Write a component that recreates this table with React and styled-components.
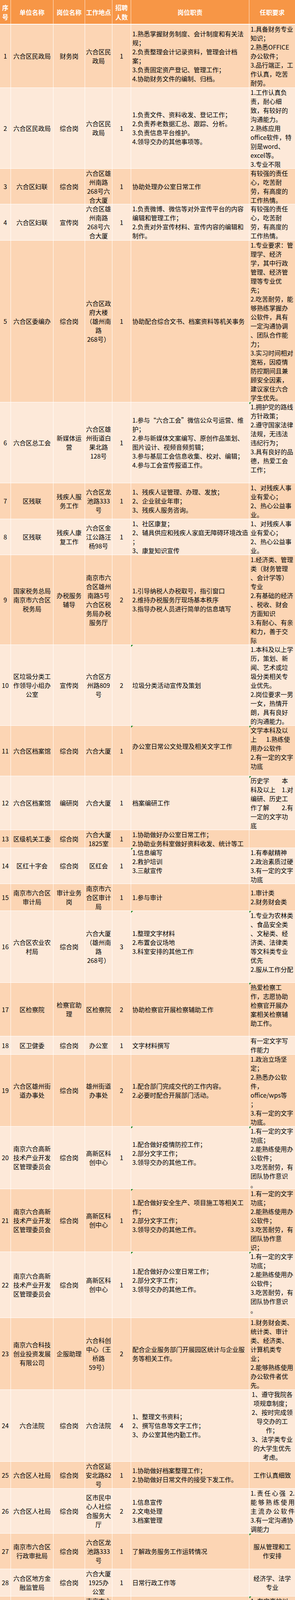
import React from "react";
import styled, { createGlobalStyle, css } from "styled-components";

const GlobalStyle = createGlobalStyle`
  html, body {
    margin: 0;
    padding: 0;
    background: #ffffff;
  }
  body {
    font-family: "Noto Sans CJK SC", "Noto Sans", sans-serif;
    color: #000;
  }
`;

const WIDTHS = [28, 109, 81, 70, 48, 303, 117];

const Table = styled.div`
  width: 756px;
  display: flex;
  flex-direction: column;
`;

const HeaderRow = styled.div`
  display: flex;
  flex: 0 0 63px;
  height: 63px;
  overflow: hidden;
  box-sizing: border-box;
  background: #f79646;
  border-bottom: 2px solid #ffffff;
`;

const HeaderCell = styled.div`
  flex: 0 0 ${(p) => p.$w}px;
  box-sizing: border-box;
  display: flex;
  flex-direction: column;
  justify-content: center;
  align-items: center;
  color: #ffffff;
  font-weight: 700;
  font-size: 16px;
  line-height: 24px;
  text-align: center;
  border-right: 1px solid rgba(255, 255, 255, 0.8);

  &:last-child {
    border-right: none;
  }
`;

const Row = styled.div`
  display: flex;
  flex: 0 0 ${(p) => p.$h}px;
  height: ${(p) => p.$h}px;
  overflow: hidden;
  box-sizing: border-box;
  background: ${(p) => (p.$dark ? "#fcd5b4" : "#fde9d9")};
  border-bottom: 1px solid #ffffff;
`;

const Cell = styled.div`
  flex: 0 0 ${(p) => p.$w}px;
  box-sizing: border-box;
  position: relative;
  overflow: hidden;
  display: flex;
  flex-direction: column;
  justify-content: safe center;
  text-align: ${(p) => p.$align};
  padding: ${(p) => (p.$align === "left" ? "0 1px 0 3px" : "0")};
  font-size: 16px;
  line-height: 23px;
  border-right: 1px solid #ffffff;

  &:last-child {
    border-right: none;
  }

  ${(p) =>
    p.$flag &&
    css`
      &::before {
        content: "";
        position: absolute;
        top: 0;
        left: 0;
        width: 0;
        height: 0;
        border-top: 5px solid #118011;
        border-right: 5px solid transparent;
      }
    `}
`;

const Line = styled.div`
  flex: 0 0 auto;
  min-height: 23px;
  white-space: ${(p) => (p.$justify ? "nowrap" : "pre")};
  ${(p) =>
    p.$justify &&
    css`
      text-align: justify;
      text-align-last: justify;
    `}
`;

const headers = ["序\n号", "单位名称", "岗位名称", "工作地点", "招聘\n人数", "岗位职责", "任职要求"];

const rows = [
  {
    h: 162, n: "1", unit: "六合区民政局", post: "财务岗", place: "六合区民\n政局", count: "1",
    duty: "1.熟悉掌握财务制度、会计制度和有关法\n规；\n2.负责整理会计记录资料，管理会计档\n案；\n3.负责固定资产登记、管理工作；\n4.协助财务文件的编制、归档。",
    req: "1.具备财务专业\n知识；\n2.熟悉OFFICE\n办公软件；\n3.品行端正，工\n作认真，吃苦\n耐劳。",
  },
  {
    h: 207, n: "2", unit: "六合区民政局", post: "综合岗", place: "六合区民\n政局", count: "1",
    duty: "1.负责文件、资料收发、登记工作；\n2.负责养老数据汇总、跟踪、分析。\n3.负责信息平台维护。\n4.领导交办的其他事项等。",
    req: "1.工作认真负\n责，耐心细\n致，有较好的\n沟通能力。\n2.熟练应用\noffice软件，特\n别是word、\nexcel等。\n3.专业不限",
  },
  {
    h: 91, n: "3", unit: "六合区妇联", post: "综合岗", place: "六合区雄\n州南路\n268号六\n合大厦", count: "1",
    duty: "协助处理办公室日常工作",
    req: "有较强的责任\n心，吃苦耐\n劳，有高度的\n工作热情。",
  },
  {
    h: 93, n: "4", unit: "六合区妇联", post: "宣传岗", place: "六合区雄\n州南路\n268号六\n合大厦", count: "1",
    duty: "1.负责微博、微信等对外宣传平台的内容\n编辑和管理工作；\n2.负责对外宣传材料、宣传内容的编辑和\n制作。",
    req: "有较强的责任\n心，吃苦耐\n劳，有高度的\n工作热情。",
  },
  {
    h: 414, n: "5", unit: "六合区委编办", post: "综合岗", place: "六合区政\n府大楼\n（雄州南\n路\n268号）", count: "1",
    duty: "协助配合综合文书、档案资料等机关事务",
    req: "1.专业要求：管\n理学、经济\n学，其中行政\n管理、经济管\n理等专业优\n先；\n2.吃苦耐劳，能\n够熟练掌握办\n公软件，具有\n一定沟通协调\n、团队合作能\n力；\n3.实习时间相对\n宽裕，因疫情\n防控期间且兼\n顾安全因素，\n建议家住六合\n学生优先。",
  },
  {
    h: 207, n: "6", unit: "六合区总工会", post: "新媒体运\n营", place: "六合区雄\n州街道白\n果北路\n128号", count: "1",
    duty: "1.参与“六合工会”微信公众号运营、维\n护；\n2.参与新媒体文案编写、原创作品策划、\n图片设计、视频音频剪辑；\n3.参与基层工会信息收集、校对、编辑；\n4.参与工会宣传报道工作。",
    req: "1.拥护党的路线\n方针政策；\n2.遵守国家法律\n法规，无违法\n违纪行为；\n3.具有良好的品\n德，热爱工会\n工作；\n",
    reqFlag: true,
  },
  {
    h: 92, n: "7", unit: "区残联", post: "残疾人服\n务工作", place: "六合区龙\n池路333\n号", count: "1",
    duty: "1、残疾人证管理、办理、发放；\n2、企业就业年审；\n3、残疾人服务咨询。",
    req: "1、对残疾人事\n业有爱心；\n2、热心公益事\n业。",
  },
  {
    h: 92, n: "8", unit: "区残联", post: "残疾人康\n复工作", place: "六合区金\n江公路汪\n杨98号", count: "1",
    duty: "1、社区康复；\n2、辅具供应和残疾人家庭无障碍环境改造\n；\n3、康复知识宣传",
    req: "1、对残疾人事\n业有爱心；\n2、热心公益事\n业。",
  },
  {
    h: 230, n: "9", unit: "国家税务总局\n南京市六合区\n税务局", post: "办税服务\n辅导", place: "南京市六\n合区雄州\n南路5号\n六合区税\n务局办税\n服务厅", count: "2",
    duty: "1.引导纳税人办税取号，指引窗口\n2.维持办税服务厅现场基本秩序\n3.指导办税人员进行简单的信息填写",
    req: "1.经济类、管理\n类（财务管理\n、会计学等）\n专业\n2.有基础的经济\n、税收、财会\n方面知识\n3.有耐心、有亲\n和力，善于交\n际",
  },
  {
    h: 207, n: "10", unit: "区垃圾分类工\n作领导小组办\n公室", post: "宣传岗", place: "六合区方\n州路809\n号", count: "2",
    duty: "垃圾分类活动宣传及策划",
    req: "1.本科及以上学\n历，策划、新\n闻、艺术或垃\n圾分类相关专\n业优先。\n2.岗位要求一男\n一女，热情开\n朗，具有良好\n的沟通能力。",
    dutyFlag: true,
  },
  {
    h: 129, n: "11", unit: "六合区档案馆", post: "综合岗", place: "六合大厦", count: "1",
    duty: "办公室日常公文处理及相关文字工作\n",
    req: "文学本科及以\n上\u3000\u20021.熟练使\n用办公软件\n2.有一定的文字\n功底\n",
    dutyFlag: true, reqFlag: true,
  },
  {
    h: 138, n: "12", unit: "六合区档案馆", post: "编研岗", place: "六合大厦", count: "1",
    duty: "档案编研工作",
    req: "历史学\u3000\u3000本\n科及以上\u30001.对\n编研、历史工\n作了解\u3000\u30002.有\n一定的文字功\n底",
    reqFlag: true,
  },
  {
    h: 46, n: "13", unit: "区级机关工委", post: "综合岗", place: "六合大厦\n1825室", count: "1",
    duty: "1.协助做好办公室日常工作；\n2.协助业务科室做好资料收发、统计等工",
    req: "",
  },
  {
    h: 92, n: "14", unit: "区红十字会", post: "综合岗", place: "区红会", count: "1",
    duty: "1.信息编写\n2.救护培训\n3.三献宣传\n",
    req: "1.有奉献精神\n2.政治素质过硬\n3.有一定的文字\n功底",
    dutyFlag: true,
  },
  {
    h: 69, n: "15", unit: "南京市六合区\n审计局", post: "审计业务\n岗", place: "南京市六\n合区审计\n局", count: "1",
    duty: "1.参与审计",
    req: "1.审计类\n2.财务财会类",
  },
  {
    h: 184, n: "16", unit: "六合区农业农\n村局", post: "综合岗", place: "六合大厦\n（雄州南\n路\n268号）", count: "3",
    duty: "1.整理文字材料\n2.布置会议场地\n3.科室安排的其他工作\n",
    req: "1.专业为农林类\n、食品安全类\n、文秘类、经\n济类、法律类\n等文科类专业\n优先\n2.服从工作分配\n",
    dutyFlag: true, reqFlag: true,
  },
  {
    h: 137, n: "17", unit: "区检察院", post: "检察官助\n理", place: "区检察院", count: "2",
    duty: "协助检察官开展检察辅助工作",
    req: "热爱检察工\n作，志愿协助\n检察官开展办\n案相关检察辅\n助工作。\n",
    reqFlag: true,
  },
  {
    h: 47, n: "18", unit: "区卫健委", post: "综合岗", place: "办公室", count: "1",
    duty: "文字材料撰写",
    req: "有一定文字写\n作能力",
  },
  {
    h: 184, n: "19", unit: "六合区雄州街\n道办事处", post: "综合岗", place: "雄州街道\n办事处", count: "2",
    duty: "1.配合部门完成交代的工作内容。\n2.必要时配合开展部门活动。",
    req: "1.政治立场坚\n定；\n2.熟悉办公软\n件，\noffice/wps等\n；\n3.有一定的文字\n功底。",
  },
  {
    h: 160, n: "20", unit: "南京六合高新\n技术产业开发\n区管理委员会", post: "综合岗", place: "高新区科\n创中心", count: "1",
    duty: "1.配合做好疫情防控工作；\n2.部分文字工作；\n3.领导交办的其他工作。\n",
    req: "1.有一定的文字\n功底；\n2.能熟练使用办\n公软件；\n3.吃苦耐劳，有\n团队协作意识\n。",
    dutyFlag: true, reqFlag: true,
  },
  {
    h: 161, n: "21", unit: "南京六合高新\n技术产业开发\n区管理委员会", post: "综合岗", place: "高新区科\n创中心", count: "1",
    duty: "1.配合做好安全生产、项目施工等相关工\n作；\n2.部分文字工作；\n3.领导交办的其他工作。\n",
    req: "1.有一定的文字\n功底；\n2.能熟练使用办\n公软件；\n3.吃苦耐劳，有\n团队协作意\n识；",
    dutyFlag: true,
  },
  {
    h: 169, n: "22", unit: "南京六合高新\n技术产业开发\n区管理委员会", post: "综合岗", place: "高新区科\n创中心", count: "1",
    duty: "1.配合做好办公室日常工作；\n2.部分文字工作；\n3.领导交办的其他工作。\n",
    req: "1.有一定的文字\n功底；\n2.能熟练使用办\n公软件；\n3.吃苦耐劳，有\n团队协作意识\n。\n",
    dutyFlag: true, reqFlag: true,
  },
  {
    h: 184, n: "23", unit: "南京六合科技\n创业投资发展\n有限公司", post: "企服助理", place: "六合科创\n中心（王\n桥路\n59号）", count: "2",
    duty: "配合企业服务部门开展园区统计与企业服\n务等相关工作。",
    req: "1.财务财会类、\n统计类、审计\n类、经济类、\n计算机类专\n业；\n2.能够熟练使用\n办公软件者优\n先。",
  },
  {
    h: 184, n: "24", unit: "六合法院", post: "综合岗", place: "六合法院", count: "4",
    duty: "1、整理文书资料；\n2、撰写信息等文字工作；\n3、办公室其他内勤工作。",
    req: "1、遵守我院各\n项规章制度；\n2、按时完成领\n导交办的工\n作；\n3、法学类专业\n的大学生优先\n考虑。",
    reqAlign: "center",
  },
  {
    h: 69, n: "25", unit: "六合区人社局", post: "综合岗", place: "六合区延\n安北路82\n号", count: "1",
    duty: "1.协助做好档案整理工作；\n2.协助做好日常文件的接受下发工作。",
    req: "工作认真细致",
    reqAlign: "center",
  },
  {
    h: 115, n: "26", unit: "六合区人社局", post: "综合岗", place: "区市民中\n心人社综\n合服务大\n厅", count: "2",
    duty: "1.信息宣传\n2.文电处理\n3.档案管理",
    req: "1.责任心强 2.\n能够熟练使用\n主流办公软件\n3.有一定沟通协\n调能力",
    reqJustify: [0, 1, 2],
  },
  {
    h: 91, n: "27", unit: "南京市六合区\n行政审批局", post: "综合岗", place: "六合区龙\n池路333\n号", count: "1",
    duty: "了解政务服务工作运转情况",
    req: "服从管理和工\n作安排",
    reqAlign: "center", reqFlag: true,
  },
  {
    h: 70, n: "28", unit: "六合区地方金\n融监管局", post: "综合岗", place: "六合大厦\n1925办\n公室", count: "1",
    duty: "日常行政工作等",
    req: "经济学、法学\n专业",
    reqAlign: "center",
  },
  {
    h: 183, n: "29", unit: "南京市规划和\n自然资源局六\n合分局", post: "综合岗", place: "南京市六\n合区雄州\n南路1号\n（南京市\n规划和自\n然资源局\n六合分\n局）", count: "2",
    duty: "协助工作人员做好档案审核、汇总等相关\n工作",
    req: "1. 在宁高校以\n及宁外南京籍\n在校大学生\n2.品学兼优、表\n现突出、具备\n较强综合素质\n的大学生\n",
    reqFlag: true,
  },
  {
    h: 93, n: "30", unit: "六合区住房保\n障中心", post: "综合岗", place: "六合区房\n产局（长\n江路\n34号）", count: "1",
    duty: "负责人才安居工作的宣传、人才安居信息\n管理系统的录入和统计，人才公寓的管理\n等工作。",
    req: "1.熟悉办公软件\n2.具有一定文字\n功底\n3.善于沟通",
  },
  {
    h: 92, n: "31", unit: "六合区住房保\n障中心", post: "综合岗", place: "六合区房\n产局（长\n江路\n34号）", count: "1",
    duty: "负责住房保障工作的宣传、系统录入和统\n计、政策研究等工作。",
    req: "1.熟悉办公软件\n2.具有一定文字\n功底\n3.善于沟通",
  },
  {
    h: 437, n: "32", unit: "六合区委宣传\n部", post: "综合岗", place: "六合区政\n府大楼\n（雄州南\n路\n268号）", count: "4",
    duty: "1.协作配合办公室工作。\n2.协助配合网络舆情、新闻宣传工作。\n3.协助配合文明办工作。\n4.协助配合文化科、新闻出版科工作。",
    req: "1.专业要求：中\n文文秘类专业\n优先；\n2.吃苦耐劳，能\n够熟练掌握\noffice系统，具\n有一定沟通协\n调、团队合作\n能力；具有文\n字基础、新媒\n体宣传经验优\n先。\n3.课余时间相对\n宽裕，建议家\n住六合周边优\n先；\n4.中共党员（中\n共预备党员）\n优先。",
  },
  {
    h: 92, n: "33", unit: "区文旅局", post: "综合岗", place: "六合大厦", count: "1",
    duty: "1.文件学习处理\n2.基础材料撰写\n3.机关事务处理",
    req: "善于沟通，具\n有较好的文字\n能力，男性为\n佳",
  },
  {
    h: 115, n: "34", unit: "六合团区委", post: "新媒体编\n辑", place: "六合大厦", count: "1",
    duty: "1.协作配合办公室工作。\n2.协助配合完成新媒体编辑。",
    req: "1.有一定的文字\n功底\n2.有微信公众号\n、微博运营经\n验的优先",
  },
  {
    h: 68, n: "35", unit: "六合区信访局", post: "接访", place: "区信访局", count: "1",
    duty: "1.协助接待来访群众；\n2.起草、整理相关资料台账。\n",
    req: "1.法学专业\n2.文秘专业\n3.党员优先",
    dutyFlag: true,
  },
  {
    h: 70, n: "36", unit: "区委统战部", post: "综合岗", place: "六合大厦", count: "2",
    duty: "1.文档整理\n2.信息编撰\n3.会务服务",
    req: "1.勤劳朴实\n2.好学肯干\n3.专业不限",
  },
];

const Lines = ({ text, justify = [] }) =>
  text === ""
    ? null
    : text.split("\n").map((t, i) => (
        <Line key={i} $justify={justify.includes(i)}>
          {t}
        </Line>
      ));

const App = () => (
  <>
    <GlobalStyle />
    <Table>
      <HeaderRow>
        {headers.map((h, i) => (
          <HeaderCell key={h} $w={WIDTHS[i]}>
            {h.split("\n").map((t) => (
              <div key={t}>{t}</div>
            ))}
          </HeaderCell>
        ))}
      </HeaderRow>
      {rows.map((r, i) => (
        <Row key={r.n} $h={r.h} $dark={i % 2 === 0}>
          <Cell $w={WIDTHS[0]} $align="center">
            <Lines text={r.n} />
          </Cell>
          <Cell $w={WIDTHS[1]} $align="center">
            <Lines text={r.unit} />
          </Cell>
          <Cell $w={WIDTHS[2]} $align="center">
            <Lines text={r.post} />
          </Cell>
          <Cell $w={WIDTHS[3]} $align="center">
            <Lines text={r.place} />
          </Cell>
          <Cell $w={WIDTHS[4]} $align="center">
            <Lines text={r.count} />
          </Cell>
          <Cell $w={WIDTHS[5]} $align="left" $flag={r.dutyFlag}>
            <Lines text={r.duty} />
          </Cell>
          <Cell $w={WIDTHS[6]} $align={r.reqAlign || "left"} $flag={r.reqFlag}>
            <Lines text={r.req} justify={r.reqJustify} />
          </Cell>
        </Row>
      ))}
    </Table>
  </>
);

export default App;
